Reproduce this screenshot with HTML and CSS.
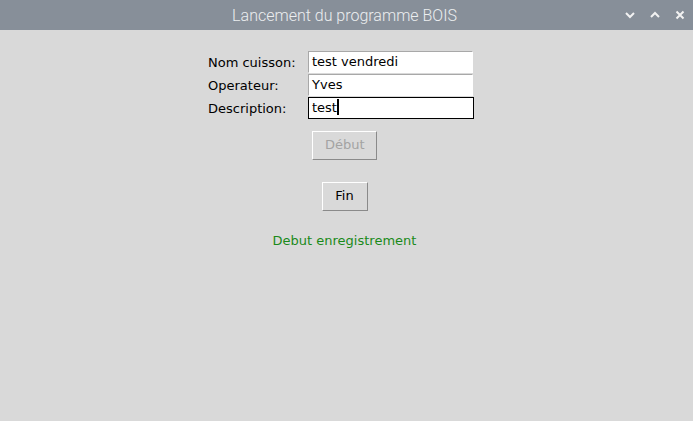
FILE: index.html
```html
<!DOCTYPE html>
<html lang="fr">
<head>
  <meta charset="UTF-8">
  <title>Lancement du programme BOIS</title>
  <link rel="stylesheet" href="styles.css">
</head>
<body>

<div class="titlebar">
  <span></span>
  <span class="title">Lancement du programme BOIS</span>
  <div class="controls">
    <svg width="10" height="8" viewBox="0 0 10 8"><path d="M1 2 L5 6 L9 2" fill="none" stroke="#f2f2f2" stroke-width="2"/></svg>
    <svg width="10" height="8" viewBox="0 0 10 8"><path d="M1 6 L5 2 L9 6" fill="none" stroke="#f2f2f2" stroke-width="2"/></svg>
    <svg width="10" height="10" viewBox="0 0 10 10"><path d="M1.5 1.5 L8.5 8.5 M8.5 1.5 L1.5 8.5" fill="none" stroke="#f2f2f2" stroke-width="2"/></svg>
  </div>
</div>

<div class="window">
  <div class="column">
    <!-- saisie -->
    <div class="form">
      <label>Nom cuisson:</label>
      <div class="entry">test vendredi</div>
      <label>Operateur:</label>
      <div class="entry">Yves</div>
      <label>Description:</label>
      <div class="entry focus">test<span class="cursor"></span></div>
    </div>

    <!-- boutons -->
    <div class="btn disabled start">Début</div>
    <div class="btn stop">Fin</div>

    <div class="status">Debut enregistrement</div>
  </div>
</div>

</body>
</html>
```

FILE: styles.css
```css
body {
  margin: 0;
  background: #d9d9d9;
  font-family: "DejaVu Sans", sans-serif;
  font-size: 13px;
  color: #000;
}
.titlebar {
  height: 30px;
  background: #878f99;
  display: grid;
  grid-template-columns: 1fr auto 1fr;
  align-items: center;
}
.title {
  font-family: Roboto, sans-serif;
  font-weight: 300;
  font-size: 16px;
  color: #eceef0;
  padding-right: 4px;
}
.controls {
  display: flex;
  justify-content: flex-end;
  align-items: center;
  gap: 15px;
  padding-right: 8px;
}
.window {
  padding-top: 21px;
}
.column {
  width: 273px;
  margin-left: 208px;
  display: flex;
  flex-direction: column;
  align-items: center;
}
.form {
  align-self: flex-start;
  display: grid;
  grid-template-columns: 100px 165px;
  grid-auto-rows: 22px;
  row-gap: 1px;
  align-items: center;
}
.entry {
  box-sizing: border-box;
  height: 22px;
  background: #fff;
  border: 1px solid #fff;
  border-top-color: #a8a8a8;
  border-left-color: #a8a8a8;
  padding: 0 3px;
  line-height: 19px;
}
.entry.focus {
  border: 1px solid #000;
  margin-top: -1px;
  width: 166px;
}
.cursor {
  display: inline-block;
  width: 2px;
  height: 16px;
  background: #000;
  vertical-align: -3px;
}
.btn {
  box-sizing: border-box;
  height: 29px;
  line-height: 26px;
  padding: 0 12px;
  border: 1px solid #fff;
  border-right-color: #8a8a8a;
  border-bottom-color: #8a8a8a;
}
.btn.disabled {
  color: #a3a3a3;
}
.start {
  margin-top: 12px;
  width: 65px;
  text-align: center;
}
.stop {
  margin-top: 22px;
  width: 46px;
  text-align: center;
}
.status {
  margin-top: 22px;
  color: #1a8a1a;
  font-size: 13px;
}
```
